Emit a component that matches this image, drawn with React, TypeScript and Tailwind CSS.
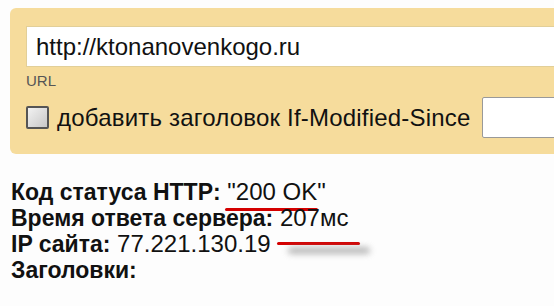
import React from 'react';

function Marked({
  children,
  line,
  shadow,
}: {
  children: React.ReactNode;
  line: string;
  shadow?: boolean;
}) {
  return (
    <span className="relative">
      {children}
      <span className={`absolute h-[3px] rounded-full bg-[#d40000] ${line}`} />
      {shadow && (
        <span className="absolute left-[8px] right-[-22px] bottom-[-23px] h-[7px] rounded-full bg-[#8a8a8a] opacity-60 blur-[3px]" />
      )}
    </span>
  );
}

export default function App() {
  return (
    <div
      className="w-[554px] h-[306px] overflow-hidden bg-[#fdfdfd] text-[#111]"
      style={{ fontFamily: '"Liberation Sans", Arial, sans-serif' }}
    >
      {/* форма */}
      <div className="ml-[10px] mt-[8px] w-[620px] rounded-l-md bg-[#f6dc9c] pl-[16px] pt-[18px] pb-[16px]">
        <div className="h-[41px] bg-white border border-[#e2cf98] flex items-center pl-[9px] text-[24px] text-[#111]">
          http://ktonanovenkogo.ru
        </div>
        <div className="mt-[5px] text-[15px] leading-[17px] text-[#555]">URL</div>
        <div className="mt-[8px] flex items-center h-[41px]">
          <span className="w-[23px] h-[23px] border-[2px] border-[#555] rounded-[2px] bg-gradient-to-br from-[#f2f2f2] to-[#c8c8c8]" />
          <span className="ml-[8px] text-[24px] tracking-[0.2px]">добавить заголовок If-Modified-Since</span>
          <span className="ml-[11px] h-[41px] w-[120px] bg-white border border-[#999] rounded-[2px]" />
        </div>
      </div>

      {/* результат */}
      <div className="mt-[25px] pl-[11px] text-[24px] leading-[26px]">
        <div>
          <b className="text-[23px]">Код статуса HTTP:</b>{' '}
          <Marked line="left-[-2px] right-[8px] bottom-[-6px]">"200 OK"</Marked>
        </div>
        <div>
          <b className="text-[23px]">Время ответа сервера:</b>{' '}
          <Marked shadow line="left-[-3px] right-[-12px] bottom-[-14px]">
            207мс
          </Marked>
        </div>
        <div>
          <b className="text-[23px]">IP сайта:</b> 77.221.130.19
        </div>
        <div>
          <b className="text-[23px]">Заголовки:</b>
        </div>
      </div>
    </div>
  );
}
